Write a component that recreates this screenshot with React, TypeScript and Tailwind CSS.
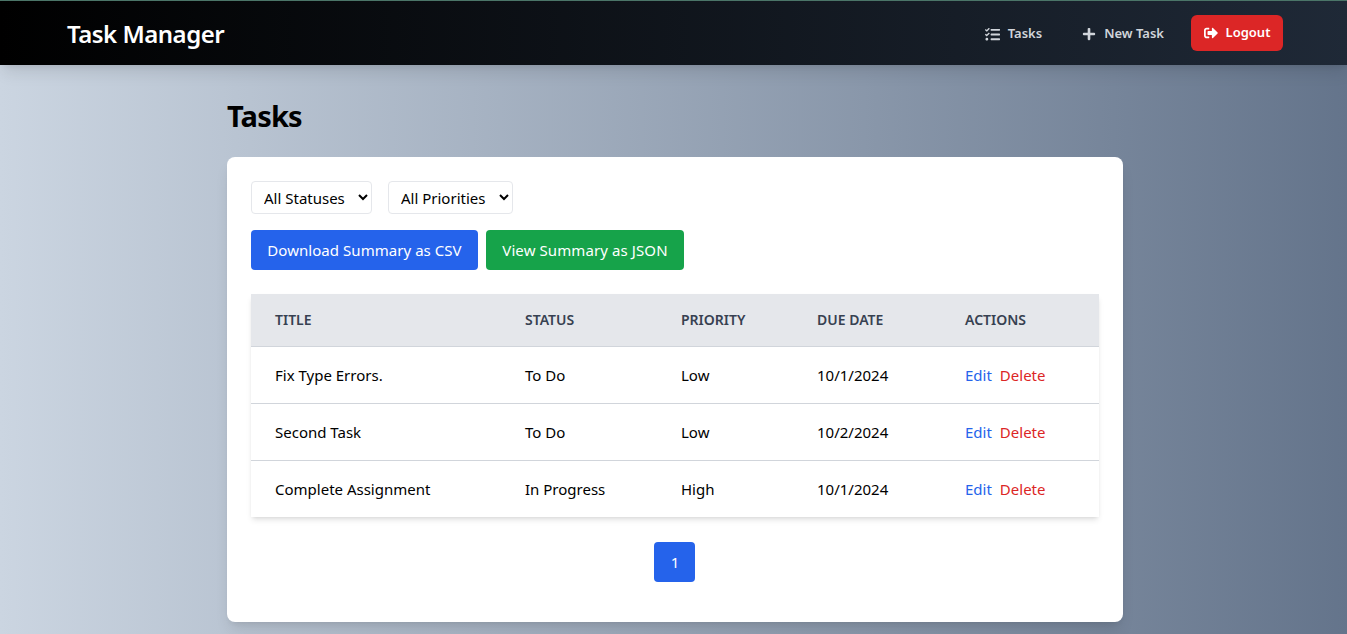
import { FaTasks, FaPlus, FaSignOutAlt } from 'react-icons/fa'

const rows = [
  { title: 'Fix Type Errors.', status: 'To Do', priority: 'Low', due: '10/1/2024' },
  { title: 'Second Task', status: 'To Do', priority: 'Low', due: '10/2/2024' },
  { title: 'Complete Assignment', status: 'In Progress', priority: 'High', due: '10/1/2024' },
]

const cols = 'grid grid-cols-[250px_156px_136px_148px_1fr] px-6'

export default function App() {
  return (
    <div className="h-[634px] overflow-hidden font-['Noto_Sans',sans-serif] text-[15px]">
      <div className="w-[1350px] h-[634px] bg-[linear-gradient(to_right,#cbd5e1,#64748b)]">
        <nav className="h-[65px] border-t border-t-[#4b7568] bg-[linear-gradient(to_right,#000000,#1f2937)] shadow-lg flex items-center justify-between pl-[67px] pr-[67px]">
          <span className="text-2xl font-semibold text-white tracking-[-0.5px] mt-[2px]">Task Manager</span>
          <div className="flex items-center text-[#d1d5db] text-[13px] font-semibold">
            <a className="flex items-center gap-2 px-3 pt-[9px] pb-[7px]"><FaTasks className="w-[15px] h-[15px]" />Tasks</a>
            <a className="flex items-center gap-2 px-3 pt-[9px] pb-[7px] ml-4"><FaPlus className="w-[14px] h-[14px]" />New Task</a>
            <button className="flex items-center justify-center gap-2 ml-[15px] h-9 w-[92px] rounded-md bg-[#dc2626] text-white">
              <FaSignOutAlt className="w-[14px] h-[14px]" />Logout
            </button>
          </div>
        </nav>
        <main className="w-[896px] mx-auto">
          <h1 className="text-[29px] font-bold text-black tracking-[-0.8px] mt-[33px] mb-[23px] leading-9">Tasks</h1>
          <div className="bg-white rounded-lg shadow-lg p-6 h-[465px]">
            <div className="flex gap-4 mb-4">
              <select className="h-[33px] w-[121px] px-2 border border-[#e5e7eb] rounded bg-white"><option>All Statuses</option></select>
              <select className="h-[33px] w-[125px] px-2 border border-[#e5e7eb] rounded bg-white"><option>All Priorities</option></select>
            </div>
            <div className="flex gap-2 mb-6">
              <button className="h-10 w-[227px] rounded bg-[#2563eb] text-white tracking-[0.05px]">Download Summary as CSV</button>
              <button className="h-10 w-[198px] rounded bg-[#16a34a] text-white tracking-[0.1px]">View Summary as JSON</button>
            </div>
            <div className="shadow-md">
              <div className={`${cols} h-[53px] items-center pb-[2px] bg-[#e5e7eb] border-b border-[#d1d5db] text-[14px] font-semibold text-[#374151]`}>
                <span>TITLE</span><span>STATUS</span><span>PRIORITY</span><span>DUE DATE</span><span>ACTIONS</span>
              </div>
              {rows.map((r, i) => (
                <div key={i} className={`${cols} items-center text-black ${i < 2 ? 'h-[57px] border-b border-[#d1d5db]' : 'h-[56px]'}`}>
                  <span>{r.title}</span>
                  <span>{r.status}</span>
                  <span>{r.priority}</span>
                  <span>{r.due}</span>
                  <span className="flex gap-2">
                    <a className="text-[#2563eb]">Edit</a>
                    <a className="text-[#dc2626]">Delete</a>
                  </span>
                </div>
              ))}
            </div>
            <div className="flex justify-center mt-[25px] pr-[1px]">
              <button className="w-[41px] h-10 pl-[1px] rounded bg-[#2563eb] text-white">1</button>
            </div>
          </div>
        </main>
      </div>
    </div>
  )
}
